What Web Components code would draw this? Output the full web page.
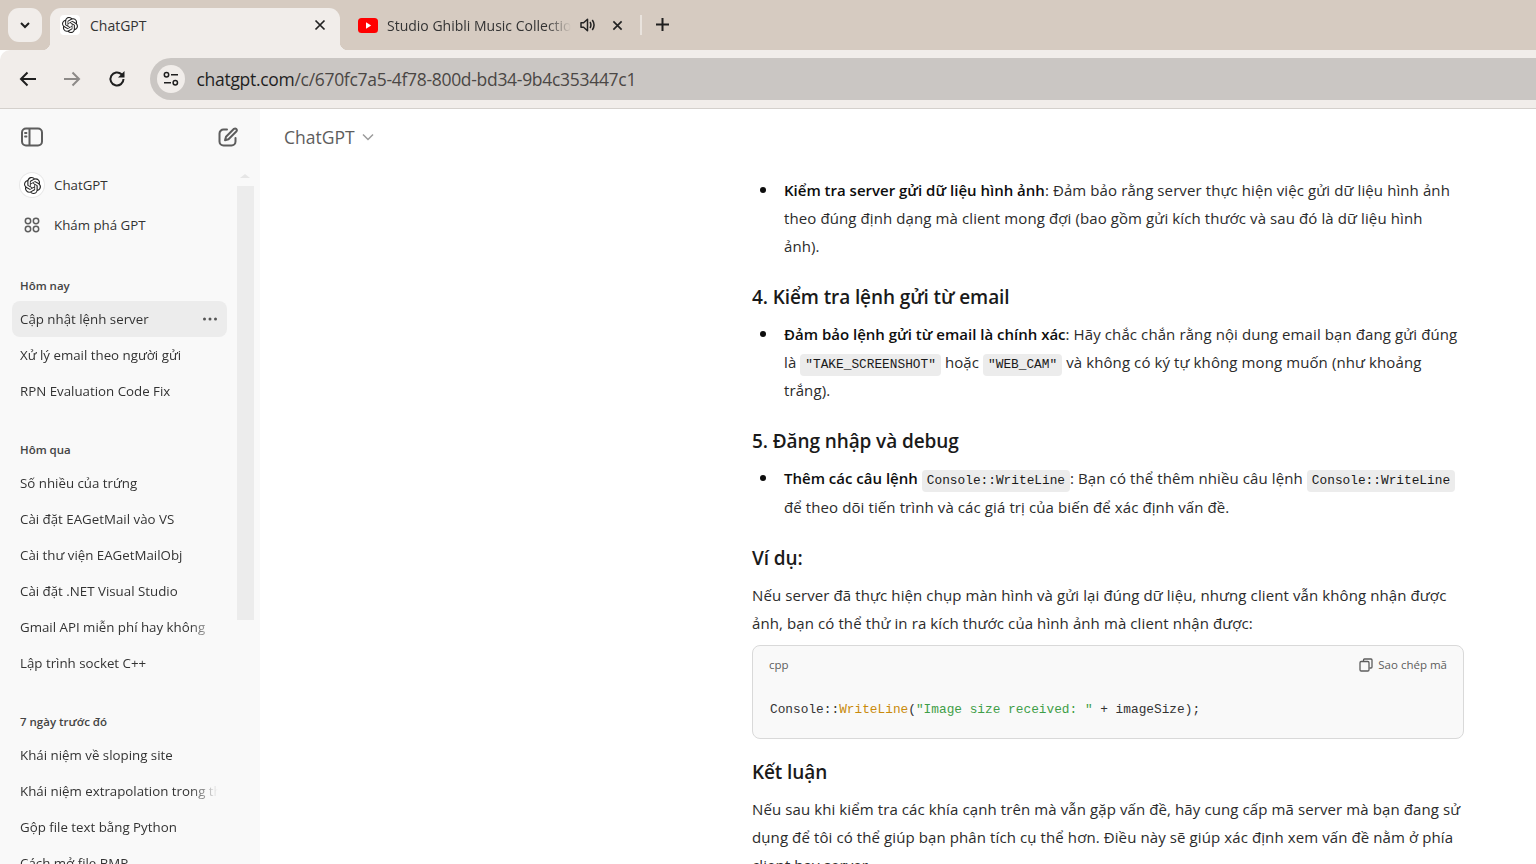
<!DOCTYPE html>
<html lang="vi">
<head>
<meta charset="utf-8">
<title>ChatGPT</title>
<style>
  html, body { margin: 0; height: 100%; overflow: hidden; }
  body {
    display: flex;
    flex-direction: column;
    font-family: "Open Sans", "Noto Sans", sans-serif;
    color: #0d0d0d;
    background: #fff;
  }
</style>
</head>
<body>
<tab-strip></tab-strip>
<tool-bar></tool-bar>
<app-shell>
  <side-bar></side-bar>
  <chat-main></chat-main>
</app-shell>

<script>
const knot = 'M22.2819 9.8211a5.9847 5.9847 0 0 0-.5157-4.9108 6.0462 6.0462 0 0 0-6.5098-2.9A6.0651 6.0651 0 0 0 4.9807 4.1818a5.9847 5.9847 0 0 0-3.9977 2.9 6.0462 6.0462 0 0 0 .7427 7.0966 5.98 5.98 0 0 0 .511 4.9107 6.051 6.051 0 0 0 6.5146 2.9001A5.9847 5.9847 0 0 0 13.2599 24a6.0557 6.0557 0 0 0 5.7718-4.2058 5.9894 5.9894 0 0 0 3.9977-2.9001 6.0557 6.0557 0 0 0-.7475-7.0729zm-9.022 12.6081a4.4755 4.4755 0 0 1-2.8764-1.0408l.1419-.0804 4.7783-2.7582a.7948.7948 0 0 0 .3927-.6813v-6.7369l2.02 1.1686a.071.071 0 0 1 .038.052v5.5826a4.504 4.504 0 0 1-4.4945 4.4944zm-9.6607-4.1254a4.4708 4.4708 0 0 1-.5346-3.0137l.142.0852 4.783 2.7582a.7712.7712 0 0 0 .7806 0l5.8428-3.3685v2.3324a.0804.0804 0 0 1-.0332.0615L9.74 19.9502a4.4992 4.4992 0 0 1-6.1408-1.6464zM2.3408 7.8956a4.485 4.485 0 0 1 2.3655-1.9728V11.6a.7664.7664 0 0 0 .3879.6765l5.8144 3.3543-2.0201 1.1685a.0757.0757 0 0 1-.071 0l-4.8303-2.7865A4.504 4.504 0 0 1 2.3408 7.872zm16.5963 3.8558L13.1038 8.364 15.1192 7.2a.0757.0757 0 0 1 .071 0l4.8303 2.7913a4.4944 4.4944 0 0 1-.6765 8.1042v-5.6772a.79.79 0 0 0-.407-.667zm2.0107-3.0231l-.142-.0852-4.7735-2.7818a.7759.7759 0 0 0-.7854 0L9.409 9.2297V6.8974a.0662.0662 0 0 1 .0284-.0615l4.8303-2.7866a4.4992 4.4992 0 0 1 6.6802 4.66zM8.3065 12.863l-2.02-1.1638a.0804.0804 0 0 1-.038-.0567V6.0742a4.4992 4.4992 0 0 1 7.3757-3.4537l-.142.0805L8.704 5.459a.7948.7948 0 0 0-.3927.6813zm1.0976-2.3654l2.602-1.4998 2.6069 1.4998v2.9994l-2.5974 1.4997-2.6067-1.4997Z';

class TabStrip extends HTMLElement {
  constructor() {
    super();
    this.attachShadow({ mode: 'open' }).innerHTML = `
    <style>
      :host { display: flex; flex: none; height: 50px; background: #d6cbc1; font-size: 14px; color: #333; }
      .search { width: 34px; height: 34px; margin: 8px 8px 0; border-radius: 11px; background: #f1edea; display: flex; align-items: center; justify-content: center; }
      .tab { height: 42px; margin-top: 8px; padding-bottom: 8px; display: flex; align-items: center; box-sizing: border-box; position: relative; }
      .active { width: 290px; background: #f1edea; border-radius: 11px 11px 0 0; padding-left: 10px; padding-right: 12px; }
      .active::before, .active::after { content: ''; position: absolute; bottom: 0; width: 8px; height: 8px; }
      .active::before { left: -8px; background: radial-gradient(circle at 0 0, transparent 8px, #f1edea 8.5px); }
      .active::after { right: -8px; background: radial-gradient(circle at 100% 0, transparent 8px, #f1edea 8.5px); }
      .fav { width: 20px; height: 20px; background: #fff; border-radius: 4px; flex: none; }
      .title { margin-left: 10px; white-space: nowrap; overflow: hidden; flex: 1; }
      .second { width: 290px; padding-left: 18px; }
      .second .title { margin-left: 9px; flex: none; width: 185px; -webkit-mask-image: linear-gradient(90deg, #000 160px, transparent 184px); mask-image: linear-gradient(90deg, #000 160px, transparent 184px); }
      svg { display: block; flex: none; }
      .sound { margin-left: 8px; }
      .x { margin-left: 16px; }
      .sep { width: 2px; height: 20px; background: #e9e3dd; margin: 15px 0 0 10px; }
      .plus { margin: 17px 0 0 13px; }
    </style>
    <div class="search"><svg width="12" height="12" viewBox="0 0 12 12"><path d="M2 4l4 4 4-4" fill="none" stroke="#1f1f1f" stroke-width="2"/></svg></div>
    <div class="tab active">
      <svg class="fav" viewBox="-3 -3 30 30"><path d="${knot}" fill="#222"/></svg>
      <span class="title">ChatGPT</span>
      <svg width="12" height="12" viewBox="0 0 12 12" style="margin-right:2px"><path d="M1.5 1.5l9 9M10.5 1.5l-9 9" stroke="#222" stroke-width="1.7"/></svg>
    </div>
    <div class="tab second">
      <svg width="20" height="15" viewBox="0 0 20 15"><rect width="20" height="15" rx="3.5" fill="#f00"/><path d="M8 4.2l5.2 3.3L8 10.8z" fill="#fff"/></svg>
      <span class="title">Studio Ghibli Music Collection</span>
      <svg class="sound" width="16" height="14" viewBox="0 0 16 14"><path d="M1 4.7h2.6L7.5 1.2v11.6L3.6 9.3H1z" fill="none" stroke="#222" stroke-width="1.5" stroke-linejoin="round"/><path d="M10 4c1 1.6 1 4.4 0 6M12.3 2c2.1 3 2.1 7 0 10" fill="none" stroke="#222" stroke-width="1.5"/></svg>
      <svg class="x" width="11" height="11" viewBox="0 0 12 12"><path d="M1.5 1.5l9 9M10.5 1.5l-9 9" stroke="#222" stroke-width="1.8"/></svg>
    </div>
    <div class="sep"></div>
    <svg class="plus" width="15" height="15" viewBox="0 0 15 15"><path d="M7.5 1v13M1 7.5h13" stroke="#1f1f1f" stroke-width="2"/></svg>`;
  }
}

class ToolBar extends HTMLElement {
  constructor() {
    super();
    this.attachShadow({ mode: 'open' }).innerHTML = `
    <style>
      :host { display: flex; flex: none; height: 59px; box-sizing: border-box; align-items: center; background: #f1edea; border-bottom: 1px solid #d4d0cc; border-radius: 10px 0 0 0; }
      svg { display: block; flex: none; }
      .nav { display: flex; align-items: center; gap: 26px; margin: 0 24px 0 19px; }
      .reload { margin-left: 1px; }
      .omni { flex: 1; height: 42px; display: flex; align-items: center; border-radius: 21px 0 0 21px; background: #cac6c3; padding-left: 7px; }
      .site { width: 28px; height: 28px; border-radius: 50%; background: #f1edea; display: flex; align-items: center; justify-content: center; margin-right: 11.500px; }
      .url { font-size: 17.500px; color: #4a4745; white-space: nowrap; letter-spacing: -.3px; }
      b { font-weight: 400; color: #1f1f1f; }
    </style>
    <div class="nav">
      <svg width="18" height="16" viewBox="0 0 18 16"><path d="M17 8H2.5M8.5 1.5L2 8l6.5 6.5" fill="none" stroke="#1f1f1f" stroke-width="2"/></svg>
      <svg width="18" height="16" viewBox="0 0 18 16"><path d="M1 8h14.5M9.5 1.5L16 8l-6.500 6.500" fill="none" stroke="#8d8a88" stroke-width="2"/></svg>
      <svg class="reload" width="18" height="18" viewBox="0 0 18 18"><path d="M15.500 9a6.500 6.500 0 1 1-2-4.700L15.500 6.200" fill="none" stroke="#1f1f1f" stroke-width="2"/><path d="M16.500 1v6.500H10z" fill="#1f1f1f"/></svg>
    </div>
    <div class="omni">
      <div class="site"><svg width="16" height="16" viewBox="0 0 16 16"><circle cx="3.500" cy="3.800" r="2.200" fill="none" stroke="#1f1f1f" stroke-width="1.500"/><path d="M8 3.800h7M1 11.800h7" stroke="#1f1f1f" stroke-width="1.500"/><circle cx="12.300" cy="11.800" r="2.200" fill="none" stroke="#1f1f1f" stroke-width="1.500"/></svg></div>
      <span class="url"><b>chatgpt.com</b>/c/670fc7a5-4f78-800d-bd34-9b4c353447c1</span>
    </div>`;
  }
}

class AppShell extends HTMLElement {
  constructor() {
    super();
    this.attachShadow({ mode: 'open' }).innerHTML = `
    <style>
      :host { display: flex; flex: 1; min-height: 0; overflow: hidden; }
    </style>
    <slot></slot>`;
  }
}

class SideRow extends HTMLElement {
  constructor() {
    super();
    this.attachShadow({ mode: 'open' }).innerHTML = `
    <style>
      :host { display: flex; align-items: center; height: 36px; margin-right: 33px; margin-left: 12px; padding-left: 8px; border-radius: 8px; font-size: 13.300px; color: #333; position: relative; flex: none; }
      :host([active]) { background: #ececec; }
      .label { flex: 1; white-space: nowrap; overflow: hidden; padding-right: 9px; -webkit-mask-image: linear-gradient(90deg, #000 170px, transparent 198px); mask-image: linear-gradient(90deg, #000 170px, transparent 198px); }
      .more { display: none; position: absolute; right: 9px; top: 16px; }
      :host([active]) .more { display: block; }
    </style>
    <span class="label"><slot></slot></span>
    <svg class="more" width="16" height="4" viewBox="0 0 16 4"><circle cx="2.500" cy="2" r="1.500" fill="#555"/><circle cx="8" cy="2" r="1.500" fill="#555"/><circle cx="13.500" cy="2" r="1.500" fill="#555"/></svg>`;
  }
}

class SideGroup extends HTMLElement {
  constructor() {
    super();
    this.attachShadow({ mode: 'open' }).innerHTML = `
    <style>
      :host { display: flex; flex-direction: column; margin-top: 25px; flex: none; }
      .head { height: 31px; line-height: 31px; padding-left: 20px; font-size: 11.500px; font-weight: 600; color: #444; }
    </style>
    <div class="head">${this.getAttribute('label')}</div>
    <slot></slot>`;
  }
}

class SideBar extends HTMLElement {
  constructor() {
    super();
    this.attachShadow({ mode: 'open' }).innerHTML = `
    <style>
      :host { display: flex; flex-direction: column; flex: none; width: 260px; background: #f9f9f9; overflow: hidden; position: relative; }
      .top { height: 56px; flex: none; display: flex; align-items: center; justify-content: space-between; padding: 0 22px 0 21px; }
      svg { display: block; flex: none; }
      .link { display: flex; align-items: center; height: 36px; margin-left: 20px; font-size: 13.300px; color: #333; flex: none; }
      .link span { margin-left: 10px; }
      .badge { width: 24px; height: 24px; border-radius: 50%; background: #fff; box-shadow: 0 0 0 1px #e8e8e8; display: flex; align-items: center; justify-content: center; }
      .thumb { position: absolute; left: 237px; top: 77px; width: 17px; height: 434px; background: #ececec; }
      .arrow { position: absolute; left: 240px; top: 65px; width: 0; height: 0; border: 5px solid transparent; border-top: 0; border-bottom: 4px solid #e6e6e6; }
    </style>
    <div class="top">
      <svg width="22" height="20" viewBox="0 0 22 20"><rect x="1" y="1.500" width="20" height="17" rx="4" fill="none" stroke="#5d5d5d" stroke-width="2"/><path d="M8.500 2v16" stroke="#5d5d5d" stroke-width="2"/><path d="M4 6h1.500M4 9.500h1.500" stroke="#5d5d5d" stroke-width="1.800" stroke-linecap="round"/></svg>
      <svg width="20" height="20" viewBox="0 0 20 20"><path d="M9 2.500H5.500a4 4 0 0 0-4 4v8a4 4 0 0 0 4 4h8a4 4 0 0 0 4-4V11" fill="none" stroke="#5d5d5d" stroke-width="2" stroke-linecap="round"/><path d="M16 1.800a1.800 1.800 0 0 1 2.500 2.500l-8 8-3.500 1 1-3.500z" fill="none" stroke="#5d5d5d" stroke-width="2" stroke-linejoin="round"/></svg>
    </div>
    <div style="height:2px;flex:none"></div>
    <div class="link"><div class="badge"><svg width="17" height="17" viewBox="0 0 24 24"><path d="${knot}" fill="#222"/></svg></div><span>ChatGPT</span></div>
    <div style="height:4px;flex:none"></div>
    <div class="link"><div style="width:24px;display:flex;justify-content:center"><svg width="16" height="16" viewBox="0 0 16 16"><g fill="none" stroke="#5d5d5d" stroke-width="1.500"><circle cx="4" cy="4" r="2.700"/><circle cx="12" cy="4" r="2.700"/><circle cx="4" cy="12" r="2.700"/><circle cx="12" cy="12" r="2.700"/></g></svg></div><span>Khám phá GPT</span></div>
    <div style="height:2px;flex:none"></div>
    <side-group label="Hôm nay">
      <side-row active>Cập nhật lệnh server</side-row>
      <side-row>Xử lý email theo người gửi</side-row>
      <side-row>RPN Evaluation Code Fix</side-row>
    </side-group>
    <side-group label="Hôm qua">
      <side-row>Số nhiều của trứng</side-row>
      <side-row>Cài đặt EAGetMail vào VS</side-row>
      <side-row>Cài thư viện EAGetMailObj</side-row>
      <side-row>Cài đặt .NET Visual Studio</side-row>
      <side-row>Gmail API miễn phí hay không</side-row>
      <side-row>Lập trình socket C++</side-row>
    </side-group>
    <side-group label="7 ngày trước đó">
      <side-row>Khái niệm về sloping site</side-row>
      <side-row>Khái niệm extrapolation trong thực tế</side-row>
      <side-row>Gộp file text bằng Python</side-row>
      <side-row>Cách mở file BMP</side-row>
    </side-group>
    <div class="arrow"></div>
    <div class="thumb"></div>`;
  }
}

class InlineCode extends HTMLElement {
  constructor() {
    super();
    this.attachShadow({ mode: 'open' }).innerHTML = `
    <style>
      :host { display: inline-block; height: 22px; line-height: 21px; padding: 0 5px; border-radius: 4px; background: #ececec; font-family: "Liberation Mono", monospace; font-size: 12.800px; letter-spacing: 0; color: #1a1a1a; }
    </style>
    <slot></slot>`;
  }
}

class CodeBlock extends HTMLElement {
  constructor() {
    super();
    this.attachShadow({ mode: 'open' }).innerHTML = `
    <style>
      :host { display: block; height: 94px; box-sizing: border-box; border: 1px solid #d9d9d9; border-radius: 8px; background: #f9f9f9; padding: 0 16px 0 16px; }
      .head { display: flex; align-items: center; justify-content: space-between; height: 38px; font-size: 11.500px; color: #5d5d5d; }
      .copy { display: flex; align-items: center; gap: 5px; }
      svg { display: block; }
      pre { margin: 7px 0 0 1px; font-family: "Liberation Mono", monospace; font-size: 12.800px; line-height: 38px; color: #333; }
      .fn { color: #c98a0b; }
      .str { color: #3f9e48; }
    </style>
    <div class="head"><span>cpp</span><span class="copy"><svg width="14" height="14" viewBox="0 0 14 14"><path d="M4.500 3V2a1 1 0 0 1 1-1h6.500a1 1 0 0 1 1 1v7a1 1 0 0 1-1 1h-1.500" fill="none" stroke="#5d5d5d" stroke-width="1.300"/><rect x="1" y="3.500" width="9" height="9.500" rx="1.200" fill="none" stroke="#5d5d5d" stroke-width="1.300"/></svg>Sao chép mã</span></div>
    <pre>Console::<span class="fn">WriteLine</span>(<span class="str">"Image size received: "</span> + imageSize);</pre>`;
  }
}

class ChatMain extends HTMLElement {
  constructor() {
    super();
    this.attachShadow({ mode: 'open' }).innerHTML = `
    <style>
      :host { display: flex; flex-direction: column; flex: 1; min-width: 0; overflow: hidden; background: #fff; }
      .top { height: 56px; flex: none; display: flex; align-items: center; padding-left: 24px; font-size: 17.500px; font-weight: 500; color: #5d5d5d; gap: 7px; }
      .doc { width: 712px; margin-left: 492px; padding-top: 11px; font-size: 15px; letter-spacing: .1px; line-height: 28px; color: #2b2b2b; white-space: nowrap; }
      ul { margin: 0; padding: 0 0 0 32px; list-style: none; position: relative; }
      ul::before { content: ''; position: absolute; left: 8px; top: 11px; width: 6px; height: 6px; border-radius: 50%; background: #0d0d0d; }
      strong { font-weight: 600; color: #0d0d0d; letter-spacing: 0; }
      h3 { font-size: 19px; font-weight: 600; line-height: 28px; margin: 23px 0 9px; color: #1a1a1a; letter-spacing: -.1px; }
      .next { margin-top: 19px; }
      p { margin: 0; }
      code-block { margin-top: 8px; letter-spacing: 0; }
      .tall { line-height: 28.500px; }
    </style>
    <div class="top">ChatGPT <svg width="12" height="8" viewBox="0 0 12 8"><path d="M1 1.500l5 5 5-5" fill="none" stroke="#9b9b9b" stroke-width="1.500"/></svg></div>
    <div class="doc">
      <ul><li><strong>Kiểm tra server gửi dữ liệu hình ảnh</strong>: Đảm bảo rằng server thực hiện việc gửi dữ liệu hình ảnh<br>theo đúng định dạng mà client mong đợi (bao gồm gửi kích thước và sau đó là dữ liệu hình<br>ảnh).</li></ul>
      <h3>4. Kiểm tra lệnh gửi từ email</h3>
      <ul><li><strong>Đảm bảo lệnh gửi từ email là chính xác</strong>: Hãy chắc chắn rằng nội dung email bạn đang gửi đúng<br>là <inline-code>"TAKE_SCREENSHOT"</inline-code> hoặc <inline-code>"WEB_CAM"</inline-code> và không có ký tự không mong muốn (như khoảng<br>trắng).</li></ul>
      <h3>5. Đăng nhập và debug</h3>
      <ul class="tall"><li><strong>Thêm các câu lệnh</strong> <inline-code>Console::WriteLine</inline-code>: Bạn có thể thêm nhiều câu lệnh <inline-code>Console::WriteLine</inline-code><br>để theo dõi tiến trình và các giá trị của biến để xác định vấn đề.</li></ul>
      <h3>Ví dụ:</h3>
      <p>Nếu server đã thực hiện chụp màn hình và gửi lại đúng dữ liệu, nhưng client vẫn không nhận được<br>ảnh, bạn có thể thử in ra kích thước của hình ảnh mà client nhận được:</p>
      <code-block></code-block>
      <h3 class="next">Kết luận</h3>
      <p>Nếu sau khi kiểm tra các khía cạnh trên mà vẫn gặp vấn đề, hãy cung cấp mã server mà bạn đang sử<br>dụng để tôi có thể giúp bạn phân tích cụ thể hơn. Điều này sẽ giúp xác định xem vấn đề nằm ở phía<br>client hay server.</p>
    </div>`;
  }
}

customElements.define('tab-strip', TabStrip);
customElements.define('tool-bar', ToolBar);
customElements.define('app-shell', AppShell);
customElements.define('side-row', SideRow);
customElements.define('side-group', SideGroup);
customElements.define('side-bar', SideBar);
customElements.define('inline-code', InlineCode);
customElements.define('code-block', CodeBlock);
customElements.define('chat-main', ChatMain);
</script>
</body>
</html>
